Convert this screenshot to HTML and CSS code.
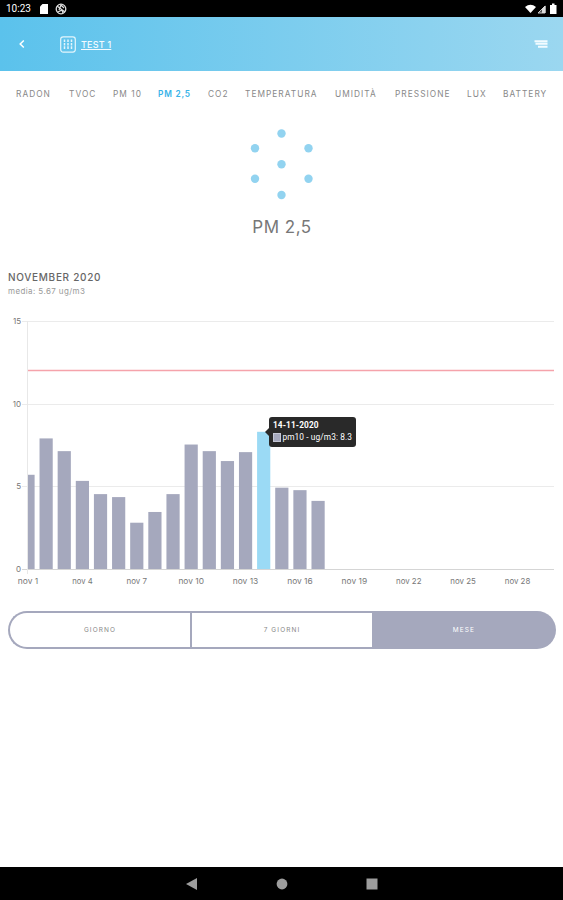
FILE: index.html
```html
<!DOCTYPE html>
<html lang="it">
<head>
    <meta charset="UTF-8">
    <meta name="viewport" content="width=device-width, initial-scale=1">
    <title>PM 2,5</title>
    <link rel="stylesheet" href="styles.css">
</head>
<body>
    <div class="statusbar">
        <span class="clock">10:23</span>
        <svg class="status-left" width="30" height="12" viewBox="0 0 30 12">
            <path d="M3.500 1H9v10H1V3.500z" fill="#fff"/>
            <circle cx="22" cy="6" r="4.800" fill="none" stroke="#ddd" stroke-width="1.300"/>
            <path d="M18 3l8 6M20 7l2-5 3 3M19 9l4-2 1 3" fill="none" stroke="#ddd" stroke-width="1.300"/>
        </svg>
        <svg class="status-right" width="34" height="12" viewBox="0 0 34 12">
            <path d="M0 4Q5.500 -.5 11 4L5.500 10z" fill="#fff"/>
            <path d="M13 10l7-7v7z" fill="#555" stroke="#ccc"/>
            <path d="M17 10V6l3.500-3.500V10z" fill="#ddd"/>
            <path d="M25 2h2V0.500h2.500V2h2v9H25z" fill="#fff"/>
        </svg>
    </div>

    <header class="header">
        <svg class="back" width="8" height="10" viewBox="0 0 8 10">
            <path d="M5.800 1.500L2.200 5l3.600 3.500" fill="none" stroke="#fff" stroke-width="1.500"/>
        </svg>
        <svg class="building" width="16" height="17" viewBox="0 0 16 17">
            <rect x=".7" y=".9" width="14.600" height="15.200" rx="2.500" fill="none" stroke="#e3f5fc" stroke-width="1.200"/>
            <path d="M4.500 3.500v10M8 3.500v10M11.500 3.500v10" stroke="#e3f5fc" stroke-width="1.500" stroke-dasharray="2.600 .8"/>
        </svg>
        <a class="place" href="#">TEST 1</a>
        <svg class="menu" width="14" height="10" viewBox="0 0 14 10">
            <path d="M.5 2.200h13M1.500 4.800h12M4 7.700h9.500" stroke="#f2fbff" stroke-width="2.100"/>
        </svg>
    </header>

    <nav class="tabs">
        <a>RADON</a>
        <a>TVOC</a>
        <a>PM 10</a>
        <a class="active">PM 2,5</a>
        <a>CO2</a>
        <a>TEMPERATURA</a>
        <a>UMIDITÀ</a>
        <a>PRESSIONE</a>
        <a>LUX</a>
        <a>BATTERY</a>
    </nav>

    <main>
        <div class="sensor">
            <svg width="64" height="72" viewBox="0 0 64 72" fill="#92d3f0">
                <circle cx="31.500" cy="5.500" r="4.200"/>
                <circle cx="5" cy="20.300" r="4.200"/>
                <circle cx="58.500" cy="20.300" r="4.200"/>
                <circle cx="31.500" cy="36.300" r="4.200"/>
                <circle cx="5" cy="50.700" r="4.200"/>
                <circle cx="58.500" cy="50.700" r="4.200"/>
                <circle cx="31.500" cy="67" r="4.200"/>
            </svg>
            <h1>PM 2,5</h1>
        </div>

        <div class="period">
            <h2>NOVEMBER 2020</h2>
            <p>media: 5.67 ug/m3</p>
        </div>

        <div class="chart">
            <svg id="chart" width="563" height="290" viewBox="0 310 563 290"></svg>
            <div class="tooltip">
                <strong>14-11-2020</strong>
                <div class="row"><i></i><span>pm10 - ug/m3: 8.3</span></div>
            </div>
        </div>

        <div class="range">
            <button type="button">GIORNO</button>
            <button type="button">7 GIORNI</button>
            <button type="button" class="selected">MESE</button>
        </div>
    </main>

    <footer class="navbar">
        <svg width="12" height="12" viewBox="0 0 12 12"><path d="M0 6l11-6v12z"/></svg>
        <svg width="12" height="12" viewBox="0 0 12 12"><circle cx="6" cy="6" r="5.400"/></svg>
        <svg width="12" height="12" viewBox="0 0 12 12"><path d="M.5 .5h11v11H.5z"/></svg>
    </footer>

    <script src="chart.js"></script>
</body>
</html>
```

FILE: styles.css
```css
* {
    box-sizing: border-box;
}
body {
    margin: 0;
    height: 900px;
    display: flex;
    flex-direction: column;
    background: #fff;
    color: #777;
    font-family: Inter, "Liberation Sans", sans-serif;
    overflow: hidden;
}
.statusbar {
    height: 17px;
    flex: none;
    display: flex;
    align-items: center;
    padding: 0 4px 0 6px;
    background: #000;
    color: #fff;
}
.clock {
    width: 33px;
    font: 400 10px/17px Roboto, sans-serif;
}
.status-right {
    margin-left: auto;
}
.header {
    height: 54px;
    flex: none;
    display: flex;
    align-items: center;
    padding: 0 15px 0 18px;
    background: linear-gradient(90deg, #5bc2ec, #9bd7f0);
}
.building {
    margin-left: 34px;
}
.place {
    margin-left: 5px;
    color: #f2fbff;
    font-size: 9px;
    font-weight: 500;
    letter-spacing: 0.2px;
    text-decoration: underline;
    text-underline-offset: 1px;
}
.menu {
    margin-left: auto;
}
.tabs {
    flex: none;
    display: grid;
    grid-template-columns: 36px 27px 28px 33px 20px 73px 43px 55px 19px 43px;
    column-gap: 17px;
    padding: 17px 0 0 16px;
    font-size: 8.300px;
    line-height: 13px;
    letter-spacing: 1.05px;
    white-space: nowrap;
    color: #888;
}
.tabs .active {
    color: #37b3e8;
    font-weight: 600;
    letter-spacing: 0.8px;
}
.sensor {
    padding-top: 27px;
    text-align: center;
}
.sensor svg {
    display: block;
    margin: 0 auto;
}
.sensor h1 {
    margin: 15px 0 0;
    padding-left: 1px;
    font-size: 17px;
    line-height: 25px;
    font-weight: 400;
    letter-spacing: 0.5px;
    color: #777;
}
.period {
    height: 70px;
    padding: 30px 8px 0;
}
.period h2 {
    margin: 0;
    font-size: 10px;
    line-height: 14px;
    font-weight: 500;
    letter-spacing: 0.7px;
    color: #666;
}
.period p {
    margin: 1px 0 0;
    font-size: 8px;
    line-height: 12px;
    letter-spacing: 0.4px;
    color: #999;
}
.chart {
    position: relative;
    height: 290px;
}
.chart svg {
    display: block;
}
.chart text {
    font-size: 8px;
    fill: #777;
}
.tooltip {
    position: absolute;
    left: 269px;
    top: 107px;
    width: 87px;
    height: 30px;
    padding: 2px 4px;
    border-radius: 3px;
    background: #292929;
    color: #fff;
    font: 8.300px/12px Roboto, sans-serif;
    letter-spacing: 0.1px;
    white-space: nowrap;
}
.tooltip::before {
    content: "";
    position: absolute;
    left: -4px;
    top: 11px;
    border: 4px solid transparent;
    border-left: 0;
    border-right-color: #292929;
}
.tooltip strong {
    display: block;
}
.tooltip .row {
    display: flex;
    align-items: center;
    gap: 1px;
}
.tooltip i {
    width: 9px;
    height: 9px;
    background: #a5a8bd;
    border: 1px solid #c4c6d4;
}
.range {
    display: grid;
    grid-template-columns: 182px 182px 1fr;
    height: 38px;
    margin: 11px 7px 0 8px;
}
.range button {
    padding: 0;
    border: 2px solid #a5a8bd;
    border-right-width: 0;
    background: #fff;
    color: #888;
    font: 6.500px Inter, sans-serif;
    letter-spacing: 1.1px;
}
.range button:first-child {
    border-radius: 19px 0 0 19px;
}
.range button:last-child {
    border-radius: 0 19px 19px 0;
}
.range .selected {
    border: 0;
    background: #a5a8bd;
    color: #fff;
}
.navbar {
    height: 33px;
    flex: none;
    margin-top: auto;
    display: flex;
    justify-content: center;
    align-items: center;
    gap: 78px;
    background: #000;
    fill: #9d9d9d;
}
```

FILE: chart.js
```js
const values = [5.7, 7.9, 7.13, 5.33, 4.53, 4.35, 2.8, 3.45, 4.53, 7.53, 7.13, 6.53, 7.07, 8.3, 4.92, 4.77, 4.12];
const left = 28;
const right = 554;
const bottom = 569;
const unit = 16.53;
const step = 18.13;
const chart = document.getElementById('chart');
let html = '';

// griglia e asse y
[0, 5, 10, 15].forEach(v => {
    const y = Math.round(bottom - v * unit);
    html += `<path d="M22 ${y + 0.5}H${right}" stroke="${v ? '#ebebeb' : '#d5d5d5'}"/>`;
    html += `<text x="21" y="${y + 3}" text-anchor="end">${v}</text>`;
});
html += `<path d="M${left - 0.5} 321V574" stroke="#e8e8e8"/>`;

// barre
values.forEach((v, i) => {
    const center = left + i * step;
    const x = i === 0 ? left : center - 6.6;
    const width = i === 0 ? 6.6 : 13.2;
    const color = v === 8.3 ? '#9bdaf5' : '#a5a8bd';
    html += `<rect x="${x}" y="${bottom - v * unit}" width="${width}" height="${v * unit}" fill="${color}"/>`;
});

// soglia
html += `<path d="M${left} 370.500H${right}" stroke="#f5a3ab" stroke-width="1.500"/>`;

for (let day = 1; day <= 28; day += 3) {
    html += `<text x="${left + (day - 1) * step}" y="584" text-anchor="middle" textLength="${day < 10 ? 20.5 : 25.5}" lengthAdjust="spacingAndGlyphs">nov ${day}</text>`;
}
chart.innerHTML = html;
```
